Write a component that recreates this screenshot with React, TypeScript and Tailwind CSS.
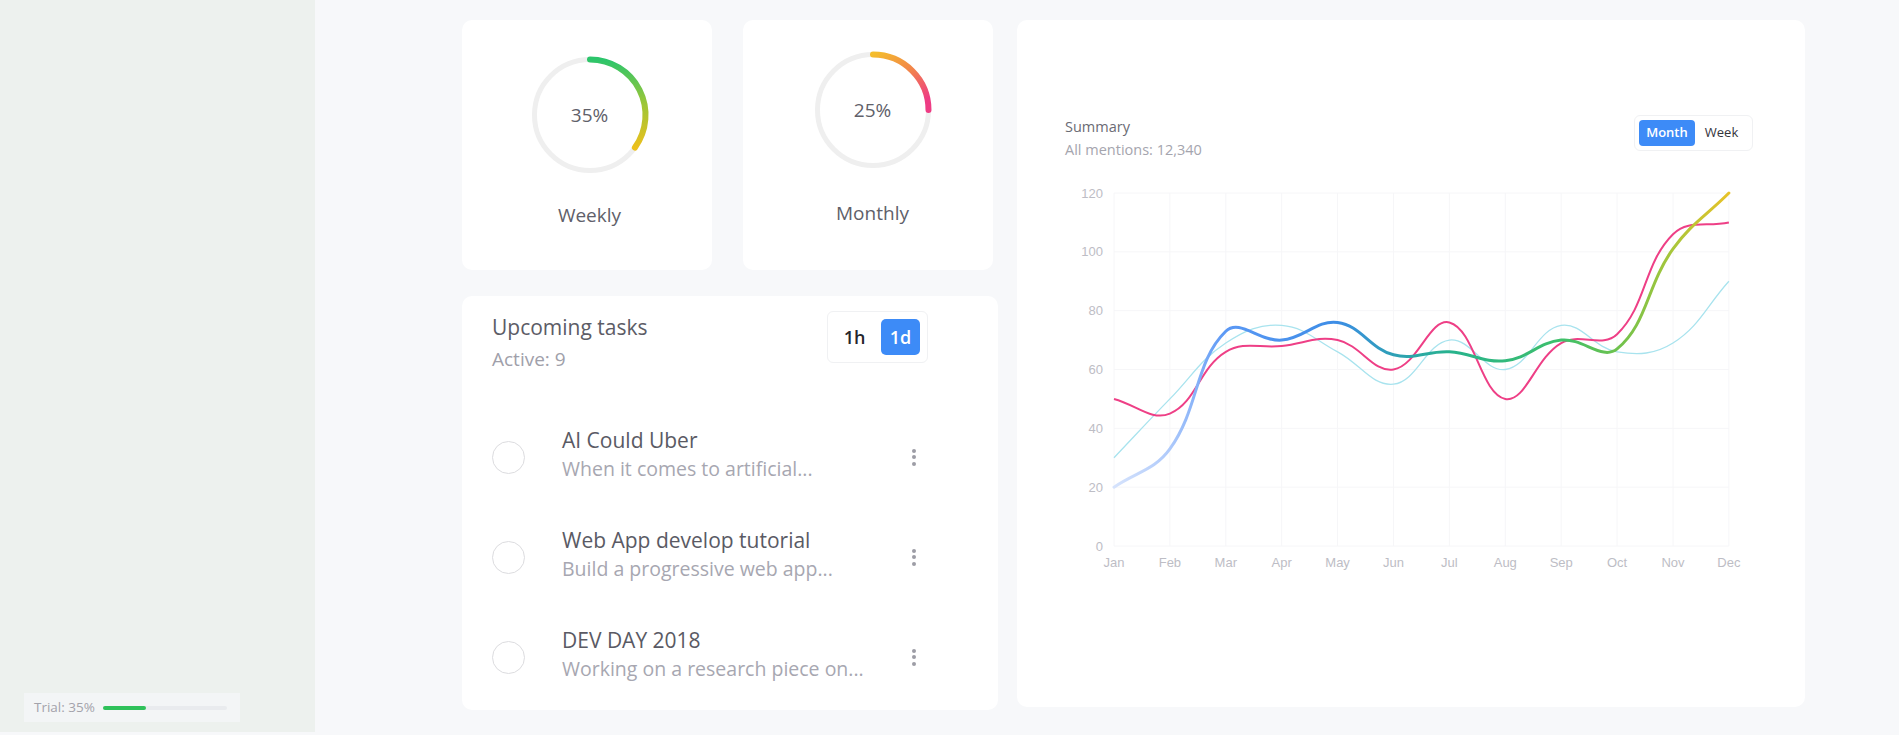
import React from 'react';

const months = ['Jan', 'Feb', 'Mar', 'Apr', 'May', 'Jun', 'Jul', 'Aug', 'Sep', 'Oct', 'Nov', 'Dec'];
const mainData = [20, 33, 73, 70, 76, 65, 66, 63, 70, 67, 101, 120];
const pinkData = [50, 45, 66, 68, 70, 60, 76, 50, 69, 72, 106, 110];
const cyanData = [30, 50, 69, 75, 66, 55, 70, 60, 75, 66, 69, 90];

const X0 = 49;
const XSTEP = 55.9;
const Y0 = 386;
const YSCALE = 353 / 120;

const px = (i: number) => X0 + i * XSTEP;
const py = (v: number) => Y0 - v * YSCALE;

// chart.js style spline (tension 0.4)
function smoothPath(data: number[], t = 0.4) {
  const pts = data.map((v, i) => [px(i), py(v)]);
  const cps = pts.map((p, i) => {
    const prev = pts[i - 1] || p;
    const next = pts[i + 1] || p;
    const d01 = Math.hypot(p[0] - prev[0], p[1] - prev[1]);
    const d12 = Math.hypot(next[0] - p[0], next[1] - p[1]);
    const sum = d01 + d12 || 1;
    const fa = (t * d01) / sum;
    const fb = (t * d12) / sum;
    return {
      prev: [p[0] - fa * (next[0] - prev[0]), p[1] - fa * (next[1] - prev[1])],
      next: [p[0] + fb * (next[0] - prev[0]), p[1] + fb * (next[1] - prev[1])],
    };
  });
  let d = `M${pts[0][0]},${pts[0][1]}`;
  for (let i = 1; i < pts.length; i++) {
    const a = cps[i - 1].next;
    const b = cps[i].prev;
    d += ` C${a[0]},${a[1]} ${b[0]},${b[1]} ${pts[i][0]},${pts[i][1]}`;
  }
  return d;
}

function Ring({ pct, id, stops, diag }: { pct: number; id: string; stops: string[]; diag?: boolean }) {
  const r = 55.5;
  const a = pct * 2 * Math.PI;
  const ex = 60 + r * Math.sin(a);
  const ey = 60 - r * Math.cos(a);
  return (
    <div className="relative h-[120px] w-[120px]">
      <svg width="120" height="120" viewBox="0 0 120 120">
        <defs>
          <linearGradient id={id} x1="0" y1="0" x2={diag ? '0.7' : '0'} y2="1">
            {stops.map((c, i) => (
              <stop key={i} offset={i / (stops.length - 1)} stopColor={c} />
            ))}
          </linearGradient>
        </defs>
        <circle cx="60" cy="60" r={r} fill="none" stroke="#efefef" strokeWidth="5" />
        <path
          d={`M60,${60 - r} A${r},${r} 0 0 1 ${ex},${ey}`}
          fill="none"
          stroke={`url(#${id})`}
          strokeWidth="6"
          strokeLinecap="round"
        />
      </svg>
      <div className="absolute inset-0 flex items-center justify-center text-[19px] text-[#606069]">
        {Math.round(pct * 100)}%
      </div>
    </div>
  );
}

const tasks = [
  { title: 'AI Could Uber', sub: 'When it comes to artificial...' },
  { title: 'Web App develop tutorial', sub: 'Build a progressive web app...' },
  { title: 'DEV DAY 2018', sub: 'Working on a research piece on...' },
];

function TasksCard() {
  return (
    <div className="flex h-[414px] w-[536px] flex-col rounded-[10px] bg-white pl-[30px] pr-[70px] pt-[15px]">
      <div className="flex items-start justify-between">
        <div className="flex flex-col">
          <span className="mt-[2px] text-[21px] leading-[28px] text-[#5c5c66]">Upcoming tasks</span>
          <span className="mt-[5px] text-[19px] leading-[26px] text-[#a0a0aa]">Active: 9</span>
        </div>
        <div className="flex gap-[7px] rounded-[6px] border border-[#f0f1f3] p-[7px]">
          <button className="flex h-[36px] w-[39px] items-center justify-center rounded-[5px] text-[18px] font-semibold text-[#26262c]">
            1h
          </button>
          <button className="flex h-[36px] w-[39px] items-center justify-center rounded-[5px] bg-[#3d8bf7] text-[18px] font-semibold text-white">
            1d
          </button>
        </div>
      </div>
      <div className="mt-[35px] flex flex-col">
        {tasks.map((t) => (
          <div key={t.title} className="flex h-[100px] items-center">
            <div className="h-[33px] w-[33px] shrink-0 rounded-full border-[1.5px] border-[#dcdcdf]" />
            <div className="ml-[37px] flex flex-1 flex-col pb-[6px]">
              <span className="text-[21px] leading-[26px] text-[#5a5a64]">{t.title}</span>
              <span className="mt-[3px] text-[19.5px] leading-[26px] text-[#a7a7b1]">{t.sub}</span>
            </div>
            <div className="flex w-[28px] flex-col items-center gap-[2.5px]">
              <div className="h-[4px] w-[4px] rounded-full bg-[#9d9da6]" />
              <div className="h-[4px] w-[4px] rounded-full bg-[#9d9da6]" />
              <div className="h-[4px] w-[4px] rounded-full bg-[#9d9da6]" />
            </div>
          </div>
        ))}
      </div>
    </div>
  );
}

function ChartCard() {
  const ticks = [0, 20, 40, 60, 80, 100, 120];
  return (
    <div className="flex h-[687px] w-[788px] shrink-0 flex-col rounded-[10px] bg-white pl-[48px] pr-[52px] pt-[95px]">
      <div className="flex h-[45px] items-start justify-between">
        <div className="mt-[2px] flex flex-col">
          <span className="text-[14.5px] leading-[20px] text-[#6b6b74]">Summary</span>
          <span className="mt-[3px] text-[14.5px] leading-[20px] text-[#a5a5ae]">All mentions: 12,340</span>
        </div>
        <div className="flex rounded-[6px] border border-[#f0f1f3] p-[4px]">
          <button className="flex h-[26px] w-[56px] items-center justify-center rounded-[4px] bg-[#3d8bf7] text-[13px] font-semibold text-white">
            Month
          </button>
          <button className="flex h-[26px] w-[53px] items-center justify-center text-[13px] font-medium text-[#34343c]">
            Week
          </button>
        </div>
      </div>
      <svg width="688" height="430" viewBox="0 0 688 430" className="font-['Liberation_Sans',Arial,sans-serif]">
        <defs>
          <linearGradient id="mainGrad" gradientUnits="userSpaceOnUse" x1={X0} y1="0" x2={px(11)} y2="0">
            <stop offset="0" stopColor="#d6e3fc" />
            <stop offset="0.09" stopColor="#afcafb" />
            <stop offset="0.18" stopColor="#5b98f5" />
            <stop offset="0.36" stopColor="#3d8de6" />
            <stop offset="0.45" stopColor="#2e9fb8" />
            <stop offset="0.55" stopColor="#27b38c" />
            <stop offset="0.73" stopColor="#3fc06a" />
            <stop offset="0.82" stopColor="#6fc24d" />
            <stop offset="0.91" stopColor="#a9c63a" />
            <stop offset="1" stopColor="#e8c228" />
          </linearGradient>
        </defs>
        {ticks.map((v) => (
          <g key={v}>
            <line x1={X0} x2={px(11)} y1={py(v)} y2={py(v)} stroke="#f6f6f8" strokeWidth="1" />
            <text x="38" y={py(v) + 4.5} textAnchor="end" fontSize="13" fill="#bdbdc5">
              {v}
            </text>
          </g>
        ))}
        {months.map((m, i) => (
          <g key={m}>
            <line x1={px(i)} x2={px(i)} y1={py(120)} y2={py(0)} stroke="#f6f6f8" strokeWidth="1" />
            <text x={px(i)} y="406.5" textAnchor="middle" fontSize="13" fill="#bdbdc5">
              {m}
            </text>
          </g>
        ))}
        <path d={smoothPath(cyanData)} fill="none" stroke="#a8e3ee" strokeWidth="1.3" />
        <path d={smoothPath(pinkData)} fill="none" stroke="#ee3f86" strokeWidth="2" />
        <path d={smoothPath(mainData)} fill="none" stroke="url(#mainGrad)" strokeWidth="3" strokeLinecap="round" />
      </svg>
    </div>
  );
}

export default function App() {
  return (
    <div className="flex h-[735px] w-full overflow-hidden bg-[#f7f8fa] font-['Open_Sans',sans-serif]">
      <aside className="flex h-[732px] w-[315px] shrink-0 flex-col justify-end bg-[#edf1ee] px-[24px] pb-[10px]">
        <div className="flex h-[29px] w-[216px] items-center gap-[8px] bg-[#f3f5f6] px-[10px]">
          <span className="text-[13.5px] text-[#a3a3ab]">Trial: 35%</span>
          <div className="h-[4px] w-[124px] rounded-full bg-[#e9ebee]">
            <div className="h-full w-[35%] rounded-full bg-[#2fc15a]" />
          </div>
        </div>
      </aside>
      <main className="flex flex-1 items-start gap-[19px] pl-[147px] pt-[20px]">
        <div className="flex w-[536px] flex-col gap-[26px]">
          <div className="flex gap-[31px]">
            <div className="flex h-[250px] w-[250px] flex-col items-center rounded-[10px] bg-white pl-[5px] pt-[35px]">
              <Ring pct={0.35} id="wk" stops={['#2cc56b', '#9cc637', '#ecc01c']} />
              <span className="mt-[26px] text-[19px] leading-[28px] text-[#60606a]">Weekly</span>
            </div>
            <div className="flex h-[250px] w-[250px] flex-col items-center rounded-[10px] bg-white pl-[9px] pt-[30px]">
              <Ring pct={0.25} id="mo" stops={['#f4bd2c', '#f2854a', '#ee3c84']} diag />
              <span className="mt-[29px] text-[19px] leading-[28px] text-[#60606a]">Monthly</span>
            </div>
          </div>
          <TasksCard />
        </div>
        <ChartCard />
      </main>
    </div>
  );
}
